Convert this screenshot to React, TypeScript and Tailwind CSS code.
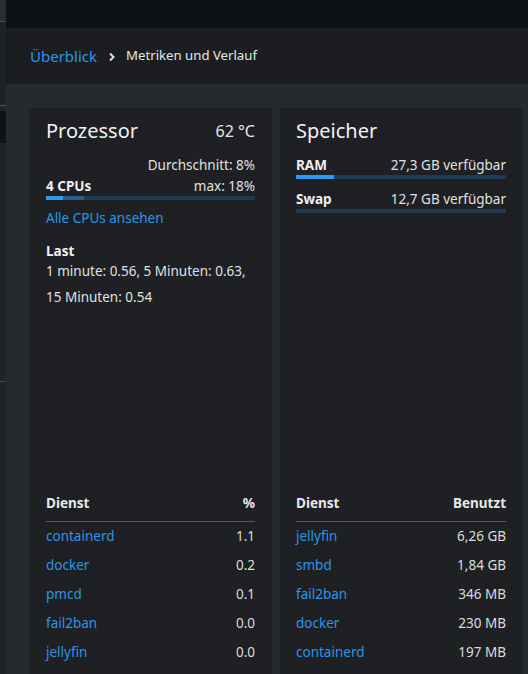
const font = { fontFamily: '"Noto Sans", "Open Sans", sans-serif' }

const cpuServices: [string, string][] = [
  ['containerd', '1.1'],
  ['docker', '0.2'],
  ['pmcd', '0.1'],
  ['fail2ban', '0.0'],
  ['jellyfin', '0.0'],
]

const memServices: [string, string][] = [
  ['jellyfin', '6,26 GB'],
  ['smbd', '1,84 GB'],
  ['fail2ban', '346 MB'],
  ['docker', '230 MB'],
  ['containerd', '197 MB'],
]

function ServiceTable({ head, rows }: { head: string; rows: [string, string][] }) {
  return (
    <div className="mt-auto">
      <div className="flex justify-between h-[36px] items-center text-[13.5px] font-bold text-[#e8e8e8] border-b border-[#56595d]">
        <span>Dienst</span>
        <span>{head}</span>
      </div>
      {rows.map(([name, val]) => (
        <div key={name} className="flex justify-between h-[29px] items-center text-[13.5px]">
          <a className="text-[#2a96ea]">{name}</a>
          <span className="text-[#dcdcdc]">{val}</span>
        </div>
      ))}
    </div>
  )
}

export default function App() {
  return (
    <div style={font} className="w-[528px] h-[674px] overflow-hidden flex bg-[#26292d] text-[#e0e0e0]">
      <aside className="w-[6px] shrink-0 flex flex-col bg-[#212427]">
        <div className="h-[22px] bg-[#2a2d31] border-b border-[#45484c]" />
        <div className="h-[84px] bg-[#1f2225] border-b border-[#505357]" />
        <div className="h-[5px]" />
        <div className="h-[32px] bg-[#101316]" />
        <div className="h-[239px] border-b border-[#45484c]" />
      </aside>

      <div className="flex-1 flex flex-col min-w-0">
        <div className="h-[28px] shrink-0 bg-[#0f1214]" />
        <nav className="h-[56px] shrink-0 bg-[#1c1d21] flex items-center pl-[24px]">
          <a className="text-[15px] text-[#2a96ea]">Überblick</a>
          <svg width="8" height="10" viewBox="0 0 8 10" className="mt-[1px] ml-[11px] mr-[10px]">
            <path d="M2 1.5 L5.5 5 L2 8.5" fill="none" stroke="#e0e0e0" strokeWidth="2" />
          </svg>
          <span className="text-[13.2px] text-[#e6e6e6]">Metriken und Verlauf</span>
        </nav>

        <div className="flex gap-[8px] pl-[23px] pt-[24px]">
          <section className="w-[243px] h-[574px] shrink-0 bg-[#1f2023] px-[17px] pt-[9px] pb-[15px] flex flex-col">
            <div className="flex justify-between items-start">
              <h2 className="text-[20px] leading-[28px] text-[#f2f2f2]">Prozessor</h2>
              <span className="text-[16px] leading-[24px] mt-[2px] text-[#e6e6e6]">62 °C</span>
            </div>
            <div className="mt-[10px] text-right text-[13.5px] leading-[20px]">Durchschnitt: 8%</div>
            <div className="flex justify-between text-[13.5px] leading-[22px]">
              <span className="font-bold text-[#f0f0f0]">4 CPUs</span>
              <span>max: 18%</span>
            </div>
            <div className="h-[4px] mt-[-1px] flex bg-[#1f3a52]">
              <div className="w-[17px] bg-[#2b9af3]" />
              <div className="w-[21px] bg-[#2a5f8c]" />
            </div>
            <a className="mt-[8px] text-[13.5px] leading-[20px] text-[#2a96ea]">Alle CPUs ansehen</a>
            <div className="mt-[13px] text-[13.5px] leading-[20px] font-bold text-[#f0f0f0]">Last</div>
            <div className="text-[13.5px] leading-[26px] mt-[-3px]">
              1 minute: 0.56, 5 Minuten: 0.63, 15 Minuten: 0.54
            </div>
            <ServiceTable head="%" rows={cpuServices} />
          </section>

          <section className="w-[242px] h-[574px] shrink-0 bg-[#1f2023] px-[16px] pt-[9px] pb-[15px] flex flex-col">
            <h2 className="text-[20px] leading-[28px] text-[#f2f2f2]">Speicher</h2>
            <div className="mt-[10px] flex justify-between text-[13.5px] leading-[20px]">
              <span className="font-bold text-[#f0f0f0]">RAM</span>
              <span>27,3 GB verfügbar</span>
            </div>
            <div className="h-[4px] flex bg-[#1f3a52]">
              <div className="w-[38px] bg-[#2b9af3]" />
            </div>
            <div className="mt-[10px] flex justify-between text-[13.5px] leading-[20px]">
              <span className="font-bold text-[#f0f0f0]">Swap</span>
              <span>12,7 GB verfügbar</span>
            </div>
            <div className="h-[4px] bg-[#1f3a52]" />
            <ServiceTable head="Benutzt" rows={memServices} />
          </section>
        </div>
      </div>
    </div>
  )
}
